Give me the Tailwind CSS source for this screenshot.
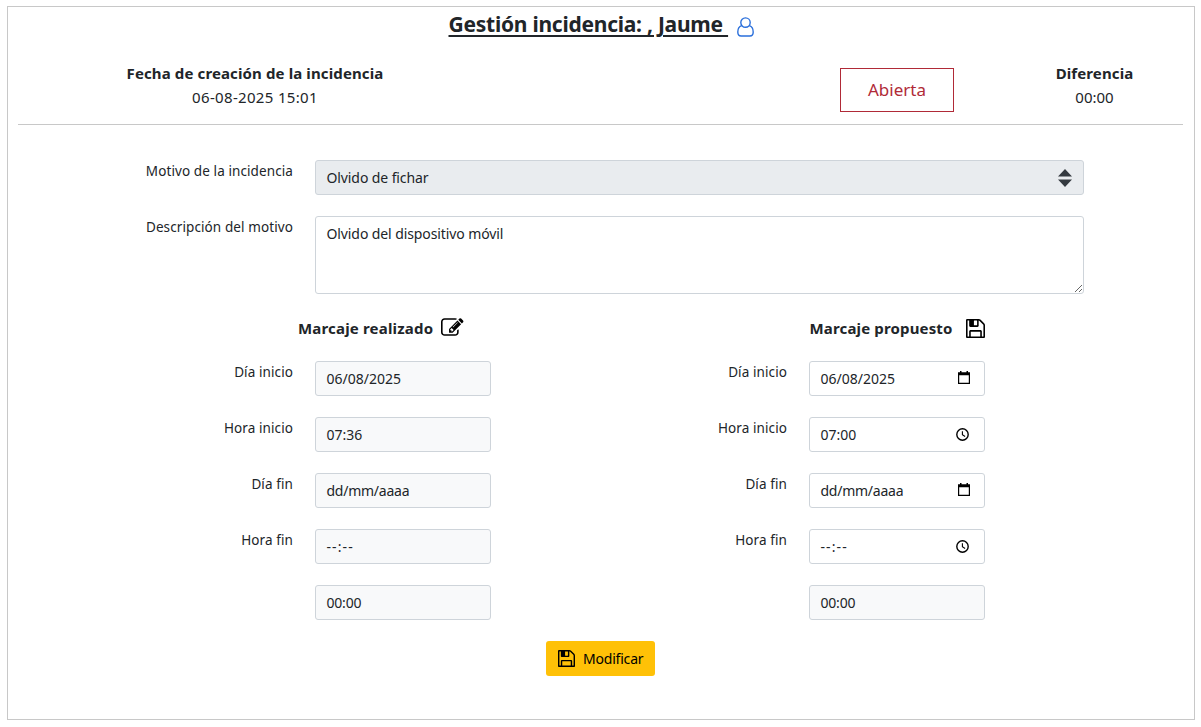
<!DOCTYPE html>
<html lang="es">
<head>
<meta charset="utf-8">
<title>Gestión incidencia</title>
<script src="https://cdn.jsdelivr.net/npm/@tailwindcss/browser@4"></script>
</head>
<body class="bg-white font-['Noto_Sans',sans-serif] text-sm text-[#212529]">
<svg class="hidden">
  <symbol id="floppy" viewBox="128 128 1536 1536"><path d="M512 1536h768v-384h-768v384zm896 0h128v-896q0-14-10-38.5t-20-34.5l-281-281q-10-10-34-20t-39-10v416q0 40-28 68t-68 28h-576q-40 0-68-28t-28-68v-416h-128v1280h128v-416q0-40 28-68t68-28h832q40 0 68 28t28 68v416zm-384-928v-320q0-13-9.5-22.5t-22.5-9.5h-192q-13 0-22.5 9.5t-9.5 22.5v320q0 13 9.5 22.5t22.5 9.5h192q13 0 22.5-9.5t9.5-22.5zm640 32v928q0 40-28 68t-68 28h-1344q-40 0-68-28t-28-68v-1344q0-40 28-68t68-28h928q40 0 88 20t76 48l280 280q28 28 48 76t20 88z"/></symbol>
  <symbol id="calendar" viewBox="0 0 12 13"><path d="M2 0h1.5v1.3h5V0H10v1.3h2V13H0V1.3h2zM1.2 4.2v7.6h9.6V4.2z" fill-rule="evenodd"/></symbol>
  <symbol id="clock" viewBox="0 0 13 13"><circle cx="6.5" cy="6.5" r="5.7" fill="none" stroke="currentColor" stroke-width="1.4"/><path d="M6.4 3.2v3.6l2.7 1.7" fill="none" stroke="currentColor" stroke-width="1.1"/></symbol>
</svg>
<main class="mt-1.5 ml-[7px] flex h-[714px] w-[1188px] flex-col border border-[#c8c8c8] px-2.5">
  <h1 class="flex h-9 items-start justify-center text-[21px] leading-[34px] font-bold tracking-[-0.25px]">
    <span class="w-[280px] whitespace-pre underline decoration-2 underline-offset-[3px]">Gestión incidencia: , Jaume </span>
    <svg class="mt-2.5 ml-2 h-5 w-[17px] text-[#2a6fdb]" viewBox="0 0 17 20" fill="none" stroke="currentColor" stroke-width="1.4"><circle cx="8.5" cy="5.6" r="4.7"/><path d="M4.6 8.6C2 9.4.8 12 .8 15c0 2.400 1.400 4 3.300 4h8.800c1.900 0 3.300-1.600 3.300-4 0-3-1.200-5.600-3.800-6.400"/></svg>
  </h1>
  <header class="flex h-[82px] w-[1165px] border-b border-[#c8c8c8] pt-[18px] text-[15px] leading-6">
    <div class="w-[474px] text-center"><b class="block tracking-[0.12px]">Fecha de creación de la incidencia</b><span class="tracking-[0.33px]">06-08-2025 15:01</span></div>
    <div class="mt-[7px] ml-[348px] flex h-11 w-[114px] items-center justify-center border border-[#b02a37] text-[17px] text-[#b02a37]">Abierta</div>
    <div class="ml-[52px] w-[177px] text-center"><b class="block tracking-[0.12px]">Diferencia</b><span>00:00</span></div>
  </header>
  <section class="mt-[35px] ml-[100px] grid w-[966px] grid-cols-[175px_769px] gap-x-[22px] gap-y-[21px] leading-[21px]">
    <label class="pt-px text-right text-[13.5px] tracking-[0.1px]">Motivo de la incidencia</label>
    <div class="flex h-[35px] items-center justify-between rounded-[3px] border border-[#ced4da] bg-[#e9ecef] pr-[11px] pl-[10.5px]"><span class="tracking-[-0.1px]">Olvido de fichar</span>
      <svg class="h-[18px] w-3.5 text-[#343a40]" viewBox="0 0 14 18" fill="currentColor"><path d="M7 0l7 7.500H0zM7 18l7-7.500H0z"/></svg></div>
    <label class="pt-px text-right text-[13.5px] tracking-[0.1px]">Descripción del motivo</label>
    <textarea class="block h-[78px] w-full resize rounded-[3px] border border-[#ced4da] px-[10.5px] py-1.5 tracking-[-0.1px]">Olvido del dispositivo móvil</textarea>
  </section>
  <section class="ml-[100px] flex leading-[21px]">
    <div class="w-[494px] pt-[22px]">
      <h2 class="flex h-[45px] items-start pl-[180px] text-[15px] leading-6 font-bold tracking-[0.18px]"><span class="w-[143px]">Marcaje realizado</span>
        <svg class="mt-[2px] h-[18px] w-[22.500px] text-black" viewBox="0 128 1792 1408" fill="currentColor"><path d="M888 1184l116-116-152-152-116 116v56h96v96h56zm440-720q-16-16-33 1l-350 350q-17 17-1 33t33-1l350-350q17-17 1-33zm80 594v190q0 119-84.5 203.5t-203.5 84.5h-832q-119 0-203.5-84.5t-84.5-203.5v-832q0-119 84.500-203.500t203.500-84.500h832q63 0 117 25 15 7 18 23 3 17-9 29l-49 49q-14 14-32 8-23-6-45-6h-832q-66 0-113 47t-47 113v832q0 66 47 113t113 47h832q66 0 113-47t47-113v-126q0-13 9-22l64-64q15-15 35-7t20 29zm-96-738l288 288-672 672h-288v-288zm444 132l-92 92-288-288 92-92q28-28 68-28t68 28l152 152q28 28 28 68t-28 68z"/></svg></h2>
      <div class="grid grid-cols-[175px_176px] gap-x-[22px] gap-y-[21px]">
        <label class="pt-px text-right text-[13.5px] tracking-[0.1px]">Día inicio</label><div class="flex h-[35px] items-center rounded-[3px] border border-[#ced4da] bg-[#f8f9fa] pl-[10.5px]">06/08/2025</div>
        <label class="pt-px text-right text-[13.5px] tracking-[0.1px]">Hora inicio</label><div class="flex h-[35px] items-center rounded-[3px] border border-[#ced4da] bg-[#f8f9fa] pl-[10.5px]">07:36</div>
        <label class="pt-px text-right text-[13.5px] tracking-[0.1px]">Día fin</label><div class="flex h-[35px] items-center rounded-[3px] border border-[#ced4da] bg-[#f8f9fa] pl-[10.5px] tracking-[-0.25px]">dd/mm/aaaa</div>
        <label class="pt-px text-right text-[13.5px] tracking-[0.1px]">Hora fin</label><div class="flex h-[35px] items-center rounded-[3px] border border-[#ced4da] bg-[#f8f9fa] pl-[10.5px] tracking-[1.1px]">--:--</div>
        <div class="col-start-2 flex h-[35px] items-center rounded-[3px] border border-[#ced4da] bg-[#f8f9fa] pl-[10.5px] tracking-[-0.2px]">00:00</div>
      </div>
    </div>
    <div class="w-[494px] pt-[22px]">
      <h2 class="flex h-[45px] items-start pl-[197.500px] text-[15px] leading-6 font-bold tracking-[0.15px]"><span class="w-[156px]">Marcaje propuesto</span>
        <svg class="mt-[3px] h-[19px] w-[19px] text-black" fill="currentColor"><use href="#floppy"/></svg></h2>
      <div class="grid grid-cols-[175px_176px] gap-x-[22px] gap-y-[21px]">
        <label class="pt-px text-right text-[13.5px] tracking-[0.1px]">Día inicio</label><div class="flex h-[35px] items-center justify-between rounded-[3px] border border-[#ced4da] pr-3.5 pl-[10.5px]">06/08/2025<svg class="-mt-0.5 h-[13px] w-3 text-black" fill="currentColor"><use href="#calendar"/></svg></div>
        <label class="pt-px text-right text-[13.5px] tracking-[0.1px]">Hora inicio</label><div class="flex h-[35px] items-center justify-between rounded-[3px] border border-[#ced4da] pr-[15px] pl-[10.5px]">07:00<svg class="h-[13px] w-[13px] text-black"><use href="#clock"/></svg></div>
        <label class="pt-px text-right text-[13.5px] tracking-[0.1px]">Día fin</label><div class="flex h-[35px] items-center justify-between rounded-[3px] border border-[#ced4da] pr-3.5 pl-[10.5px] tracking-[-0.25px]">dd/mm/aaaa<svg class="-mt-0.5 h-[13px] w-3 text-black" fill="currentColor"><use href="#calendar"/></svg></div>
        <label class="pt-px text-right text-[13.5px] tracking-[0.1px]">Hora fin</label><div class="flex h-[35px] items-center justify-between rounded-[3px] border border-[#ced4da] pr-[15px] pl-[10.5px] tracking-[1.1px]">--:--<svg class="h-[13px] w-[13px] text-black"><use href="#clock"/></svg></div>
        <div class="col-start-2 flex h-[35px] items-center rounded-[3px] border border-[#ced4da] bg-[#f8f9fa] pl-[10.5px] tracking-[-0.2px]">00:00</div>
      </div>
    </div>
  </section>
  <button class="mt-[21px] ml-[528px] flex h-[35px] w-[109px] items-center rounded-[3px] bg-[#ffc107] pl-3 tracking-[-0.2px] text-black"><svg class="mr-2 h-[17px] w-[17px]" fill="currentColor"><use href="#floppy"/></svg>Modificar</button>
</main>
</body>
</html>
